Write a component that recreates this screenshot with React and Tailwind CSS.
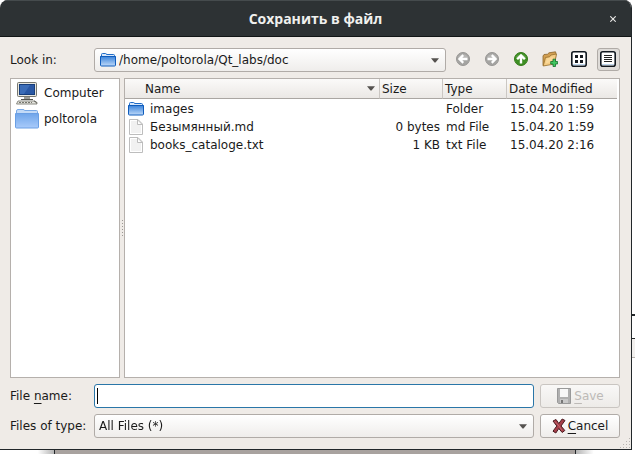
import React from "react";

const control =
  "rounded-[3px] border border-[#b0aba7] bg-linear-to-b from-[#ffffff] to-[#efedeb]";

function FolderIcon({ className }) {
  return (
    <svg viewBox="0 0 16 14" className={className} aria-hidden="true">
      <defs>
        <linearGradient id="folderFace" x1="0" y1="0" x2="0" y2="1">
          <stop offset="0" stopColor="#3a83da" />
          <stop offset="1" stopColor="#c0daf9" />
        </linearGradient>
      </defs>
      <path d="M1.500 4V1.500q0-1 1-1h3q1 0 1 1h7q1 0 1 1V4z" fill="#d6e6fa" stroke="#1f6cc8" />
      <path d="M0 3.500h16v1H0z" fill="#0f5cbc" />
      <path d="M.5 3.500h15v8.500q0 1-1 1h-13q-1 0-1-1z" fill="url(#folderFace)" stroke="#0f5cbc" />
    </svg>
  );
}

function HomeFolderIcon() {
  return (
    <svg viewBox="0 0 24 20" className="h-5 w-6" aria-hidden="true">
      <defs>
        <linearGradient id="homeFace" x1="0" y1="0" x2="0" y2="1">
          <stop offset="0" stopColor="#6fa5ea" />
          <stop offset="1" stopColor="#a9cbfa" />
        </linearGradient>
      </defs>
      <path d="M1.500 5V2q0-1.500 1.500-1.500h5q1.500 0 1.500 1h12q1 0 1 1V5z" fill="#c3daf7" stroke="#78a9e6" />
      <path d="M.5 4.500h23v13.500q0 1-1 1h-21q-1 0-1-1z" fill="url(#homeFace)" stroke="#6a9fe4" />
    </svg>
  );
}

function ComputerIcon() {
  return (
    <svg viewBox="0 0 24 24" className="h-6 w-6" aria-hidden="true">
      <rect x="2.500" y="1.500" width="19" height="14" rx="1" fill="#e6e6df" stroke="#77776f" />
      <rect x="4" y="3" width="16" height="11" fill="#173e7c" />
      <rect x="5" y="4" width="14" height="9" fill="#2a58a4" />
      <path d="M5 4h10L9 13H5z" fill="#4a7bc4" opacity=".6" />
      <path d="M9 16h6v2H9z" fill="#9b9b95" />
      <path d="M6 18.500h12" stroke="#55554f" />
      <path d="M3 20h17l2 3H1.500z" fill="#e5e5df" stroke="#8a8a82" />
      <path d="M4 21.500h13" stroke="#77776f" strokeDasharray="2 1" />
      <path d="M19 20l3 1.500v1" stroke="#66665f" fill="none" />
    </svg>
  );
}

function FileIcon() {
  return (
    <svg viewBox="0 0 16 16" className="h-4 w-4" aria-hidden="true">
      <path d="M1.500.5h8.500l4.500 4.500v10.500h-13z" fill="#fff" stroke="#bdbdbd" />
      <path d="M3 2h6l4 4v8H3z" fill="#f1f1f1" />
      <path d="M9.500.8V5.500h4.700z" fill="#fff" stroke="#bdbdbd" />
    </svg>
  );
}

function RoundArrow({ turn, green }) {
  return (
    <svg viewBox="0 0 16 16" className="h-4 w-4" aria-hidden="true">
      <circle cx="8" cy="8" r="6.500" fill={green ? "#3f8f24" : "#a5a4a2"} stroke={green ? "#347a1b" : "#989795"} />
      <path d="M3 7a5.200 5.200 0 0 1 10 0q-5 2-10 0z" fill="#fff" opacity=".2" />
      <path
        d="M8 2.800L3.300 7.500l1.700 1.500L6.800 7.300v5.200h2.400V7.300L11 9l1.700-1.500z"
        fill="#fff"
        transform={`rotate(${turn} 8 8)`}
      />
    </svg>
  );
}

function NewFolderIcon() {
  return (
    <svg viewBox="0 0 16 16" className="h-4 w-4" aria-hidden="true">
      <path d="M1 14.500L1 5l1-1.500 3.500-.3L7 1.800l6.500-1 .5 1.700-1 9z" fill="#d29f52" stroke="#8a642c" strokeWidth=".8" />
      <path d="M1.200 15L3.500 6.500l4-.7L9 4l5.500-1L12.500 13z" fill="#f5cd85" stroke="#97702f" strokeWidth=".8" />
      <path d="M5 7.500l6-1.500-1.500 5-6 1.500z" fill="#fbe0a9" opacity=".6" />
      <path d="M11 8.200h2.500v2.300H15.600V13H13.500v2.500H11V13H8.700v-2.500H11z" fill="#41c761" stroke="#14702c" strokeWidth=".8" />
    </svg>
  );
}

function ViewIcon({ list }) {
  return (
    <svg viewBox="0 0 16 16" className="h-4 w-4" aria-hidden="true">
      <rect x=".8" y=".8" width="14.400" height="14.400" rx="2" fill="#fff" stroke="#111820" strokeWidth="1.600" />
      <path d="M2 13.500h12" stroke="#bcd5ee" />
      {list ? (
        <path d="M4 4.500h8M4 6.500h8M4 8.500h8M4 10.500h8" stroke="#222" />
      ) : (
        <path d="M4 4h3v3H4zM9 4h3v3H9zM4 9h3v3H4zM9 9h3v3H9z" fill="#15191f" />
      )}
    </svg>
  );
}

function SaveIcon() {
  return (
    <svg viewBox="0 0 16 16" className="h-4 w-4" aria-hidden="true">
      <path d="M1.500.5h13v15h-12l-1-1z" fill="#b0b0b0" stroke="#999" />
      <path d="M4 1h8v8H4z" fill="#f8f8f8" />
      <path d="M4 11h8v4H4z" fill="#c9c9c9" />
      <path d="M5 12h2v3H5z" fill="#777" />
    </svg>
  );
}

function CancelIcon() {
  return (
    <svg viewBox="0 0 14 16" className="h-4 w-[14px]" aria-hidden="true">
      <path
        d="M1 3l3-1.500L6.800 5.500 10.200 1l2.800 1.500L9 8l3.800 4.500-2.600 2L6.800 10.500 3.800 15 1 13.200 4.800 8z"
        fill="#a53f4a"
        stroke="#4a1b20"
        strokeLinejoin="round"
      />
      <path d="M3 3.500L7 8l3 4.500" stroke="#c4666e" fill="none" />
    </svg>
  );
}

function DropArrow({ className }) {
  return (
    <svg viewBox="0 0 8 5" className={className} aria-hidden="true">
      <path d="M0 .3h8L4.500 4.500h-1z" fill="#55524f" />
    </svg>
  );
}

function ToolButton({ label, active, disabled, children }) {
  return (
    <button
      type="button"
      aria-label={label}
      disabled={disabled}
      className={
        active
          ? "flex h-[23px] w-[23px] items-center justify-center rounded-[3px] border border-[#b0aba7] bg-[#dedbd8] pr-px pb-px"
          : "flex h-[23px] w-[23px] items-center justify-center pr-px pb-px"
      }
    >
      {children}
    </button>
  );
}

const files = [
  { name: "images", size: "", type: "Folder", date: "15.04.20 1:59", folder: true },
  { name: "Безымянный.md", size: "0 bytes", type: "md File", date: "15.04.20 1:59" },
  { name: "books_cataloge.txt", size: "1 KB", type: "txt File", date: "15.04.20 2:16" },
];

function FileTable() {
  return (
    <div className="min-w-0 flex-1 border border-[#b5b0ac] bg-white pr-[2px]">
      <table className="w-full table-fixed border-separate border-spacing-0 text-left">
        <colgroup>
          <col className="w-[255px]" />
          <col className="w-[63px]" />
          <col className="w-[64px]" />
          <col />
        </colgroup>
        <thead>
          <tr className="h-5 bg-linear-to-b from-[#fbfaf9] to-[#eae7e4] [&>th]:border-r-[#cbc7c3] [&>th]:border-b [&>th]:border-b-[#aaa6a2] [&>th]:p-0 [&>th]:font-normal">
            <th className="border-r">
              <div className="flex items-center justify-between pr-1 pl-5">
                Name
                <DropArrow className="h-[5px] w-2" />
              </div>
            </th>
            <th className="border-r">
              <div className="pl-[2px]">Size</div>
            </th>
            <th className="border-r">
              <div className="pl-[2px]">Type</div>
            </th>
            <th>
              <div className="pl-[2px]">Date Modified</div>
            </th>
          </tr>
        </thead>
        <tbody className="before:block before:h-px">
          {files.map((file) => (
            <tr key={file.name} className="h-[18px] [&>td]:p-0">
              <td>
                <div className="flex h-[18px] items-center gap-[6px] pl-[3px]">
                  {file.folder ? <FolderIcon className="h-[14px] w-4" /> : <FileIcon />}
                  {file.name}
                </div>
              </td>
              <td>
                <div className="pr-[3px] text-right">{file.size}</div>
              </td>
              <td>
                <div className="pl-[3px]">{file.type}</div>
              </td>
              <td>
                <div className="pl-[3px]">{file.date}</div>
              </td>
            </tr>
          ))}
        </tbody>
      </table>
    </div>
  );
}

function Dialog() {
  return (
    <div className="flex min-w-0 flex-1 flex-col overflow-hidden rounded-t-lg border-r border-b border-[#22272a] bg-[#efebe7]">
      <header className="grid h-[37px] shrink-0 grid-cols-[36px_1fr_36px] items-center border-t border-b border-t-[#454b4d] border-b-[#111516] bg-[#2d3234] text-[#f0f0ee]">
        <h1 className="col-start-2 text-center font-['Open_Sans','Noto_Sans',sans-serif] text-sm leading-4 font-bold">
          Сохранить в файл
        </h1>
        <button type="button" aria-label="Close" className="flex h-6 w-9 items-center justify-center">
          <svg viewBox="0 0 6 6" className="h-[6px] w-[6px]" aria-hidden="true">
            <path d="M.3.3l5.400 5.400M5.700.3L.3 5.700" stroke="#e8e8e6" strokeWidth="1.100" />
          </svg>
        </button>
      </header>

      <main className="flex flex-1 flex-col gap-[6px] pt-[11px] pr-[11px] pl-[10px]">
        <div className="flex items-start gap-[6px]">
          <label htmlFor="look" className="w-[78px] leading-6">
            Look in:
          </label>
          <div className="relative min-w-0 flex-1">
            <select id="look" className={`${control} block h-6 w-full appearance-none pl-6 outline-none`}>
              <option>/home/poltorola/Qt_labs/doc</option>
            </select>
            <FolderIcon className="pointer-events-none absolute top-[5px] left-[6px] h-[14px] w-4" />
            <DropArrow className="pointer-events-none absolute top-[10px] right-[7px] h-[5px] w-2" />
          </div>
          <ToolButton label="Back" disabled>
            <RoundArrow turn={-90} />
          </ToolButton>
          <ToolButton label="Forward" disabled>
            <RoundArrow turn={90} />
          </ToolButton>
          <ToolButton label="Parent directory">
            <RoundArrow turn={0} green />
          </ToolButton>
          <ToolButton label="Create new folder">
            <NewFolderIcon />
          </ToolButton>
          <ToolButton label="List view">
            <ViewIcon />
          </ToolButton>
          <ToolButton label="Detail view" active>
            <ViewIcon list />
          </ToolButton>
        </div>

        <div className="flex flex-1">
          <nav className="w-[110px] border border-[#b5b0ac] bg-white">
            <ul className="pt-px pl-1">
              <li className="flex h-[26px] items-center gap-[5px]">
                <ComputerIcon />
                Computer
              </li>
              <li className="flex h-[26px] items-center gap-[5px]">
                <HomeFolderIcon />
                poltorola
              </li>
            </ul>
          </nav>
          <div className="flex w-1 flex-col items-center justify-center gap-[2px]" role="separator">
            <span className="h-px w-px bg-[#9c9894]" />
            <span className="h-px w-px bg-[#9c9894]" />
            <span className="h-px w-px bg-[#9c9894]" />
            <span className="h-px w-px bg-[#9c9894]" />
            <span className="h-px w-px bg-[#9c9894]" />
            <span className="h-px w-px bg-[#9c9894]" />
          </div>
          <FileTable />
        </div>

        <form className="grid grid-cols-[78px_1fr_80px] items-center gap-[6px]">
          <label htmlFor="filename">
            File <u className="underline-offset-[3px]">n</u>ame:
          </label>
          <div className="relative">
            <input
              id="filename"
              type="text"
              autoFocus
              className="block h-6 w-full rounded-[3px] border border-[#2a76a8] bg-white px-[2px] caret-transparent outline-none"
            />
            <span className="pointer-events-none absolute top-1 left-[3px] h-4 w-px bg-black" />
          </div>
          <button
            type="button"
            disabled
            className="flex h-6 items-center justify-center gap-[2px] rounded-[3px] border border-[#c9c5c1] bg-linear-to-b from-[#f9f8f7] to-[#edebe8] text-[#bdbab7]"
          >
            <SaveIcon />
            <span>
              <u className="underline-offset-[3px]">S</u>ave
            </span>
          </button>
          <label htmlFor="filetype" className="whitespace-nowrap">
            Files of type:
          </label>
          <div className="relative">
            <select id="filetype" className={`${control} block h-6 w-full appearance-none pl-1 outline-none`}>
              <option>All Files (*)</option>
            </select>
            <DropArrow className="pointer-events-none absolute top-[10px] right-[7px] h-[5px] w-2" />
          </div>
          <button type="button" className={`${control} flex h-6 items-center justify-center gap-[2px]`}>
            <CancelIcon />
            <span>
              <u className="underline-offset-[3px]">C</u>ancel
            </span>
          </button>
        </form>
      </main>

      <div className="flex h-[11px] justify-end">
        <svg viewBox="0 0 11 11" className="h-[11px] w-[11px]" aria-hidden="true">
          <path
            d="M9 0h1v1H9zM6 3h1v1H6zM9 3h1v1H9zM3 6h1v1H3zM6 6h1v1H6zM9 6h1v1H9zM0 9h1v1H0zM3 9h1v1H3zM6 9h1v1H6zM9 9h1v1H9z"
            fill="#b9b5b1"
          />
        </svg>
      </div>
    </div>
  );
}

export default function App() {
  return (
    <div className="flex h-screen flex-col bg-white font-['DejaVu_Sans',sans-serif] text-xs text-[#1a1a1a]">
      <div className="flex min-h-0 flex-1">
        <Dialog />
        <div className="flex w-[3px] flex-col justify-end">
          <div className="h-6 border-t-2 border-[#25292b]" />
          <div className="h-5 border-t border-b border-t-[#25292b] border-b-[#b5b0ac] bg-[#f2f0ee]" />
          <div className="h-[92px]" />
        </div>
      </div>
      <div className="flex h-1">
        <div className="w-[54px] bg-linear-to-r from-white from-70% to-[#b5b5b5]" />
        <div className="flex-1 border-x border-[#25292b] bg-[#a8a29f]" />
        <div className="w-[59px] bg-linear-to-r from-[#b5b5b5] to-white to-30%" />
      </div>
    </div>
  );
}
